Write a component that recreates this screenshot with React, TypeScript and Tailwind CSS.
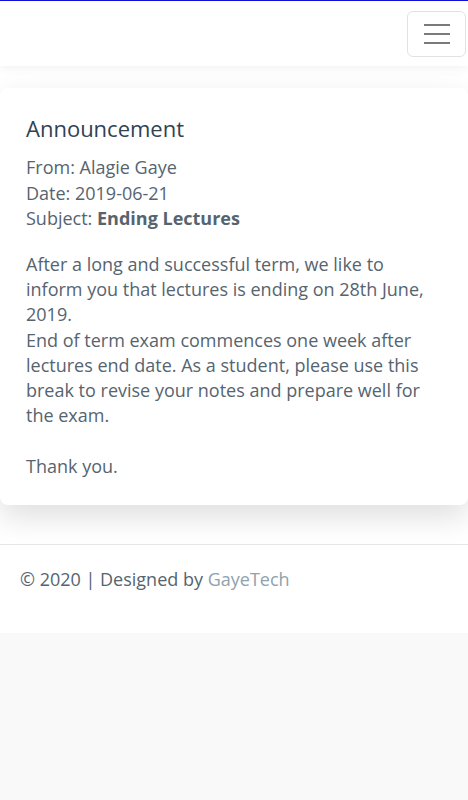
import React from "react";

const Navbar = () => {
  return (
    <nav className="h-[66px] border-t border-[#1010d0] bg-white shadow-[0_2px_10px_rgba(0,0,0,0.06)] relative z-10">
      <div className="flex justify-end pt-[10px] pr-[2px]">
        <button className="flex h-[46px] w-[59px] flex-col items-center justify-center gap-[7px] rounded-md border border-[#e2e2e2] bg-white">
          <span className="block h-[2px] w-[26px] bg-[#7a7a7a]" />
          <span className="block h-[2px] w-[26px] bg-[#7a7a7a]" />
          <span className="block h-[2px] w-[26px] bg-[#7a7a7a]" />
        </button>
      </div>
    </nav>
  );
};

const Announcement = () => {
  return (
    <div className="rounded-lg bg-white px-[26px] pt-[27px] pb-[26px] shadow-[0_12px_30px_rgba(0,0,0,0.13)]">
      <h2 className="text-[22px] leading-[1.2] text-[#2f4353]">Announcement</h2>
      <div className="mt-[14px] text-[18px] leading-[25.2px] text-[#56646f]">
        <p>From: Alagie Gaye</p>
        <p>Date: 2019-06-21</p>
        <p>
          Subject: <span className="font-bold">Ending Lectures</span>
        </p>
        <p className="mt-[21px]">
          After a long and successful term, we like to inform you that lectures
          is ending on 28th June, 2019.
          <br />
          End of term exam commences one week after lectures end date. As a
          student, please use this break to revise your notes and prepare well
          for the exam.
          <br />
          <br />
          Thank you.
        </p>
      </div>
    </div>
  );
};

export default function App() {
  return (
    <div
      className="min-h-screen bg-[#f9f9f9]"
      style={{ fontFamily: '"Open Sans", "Noto Sans", sans-serif' }}
    >
      <Navbar />
      <main className="bg-white pt-[22px] pb-[39px]">
        <Announcement />
      </main>
      <footer className="h-[89px] border-t border-[#e6e6e6] bg-white px-[20px] pt-[22px] text-[18px] leading-[25.2px] text-[#56646f]">
        © 2020 | Designed by <span className="text-[#8fa2ae]">GayeTech</span>
      </footer>
    </div>
  );
}
